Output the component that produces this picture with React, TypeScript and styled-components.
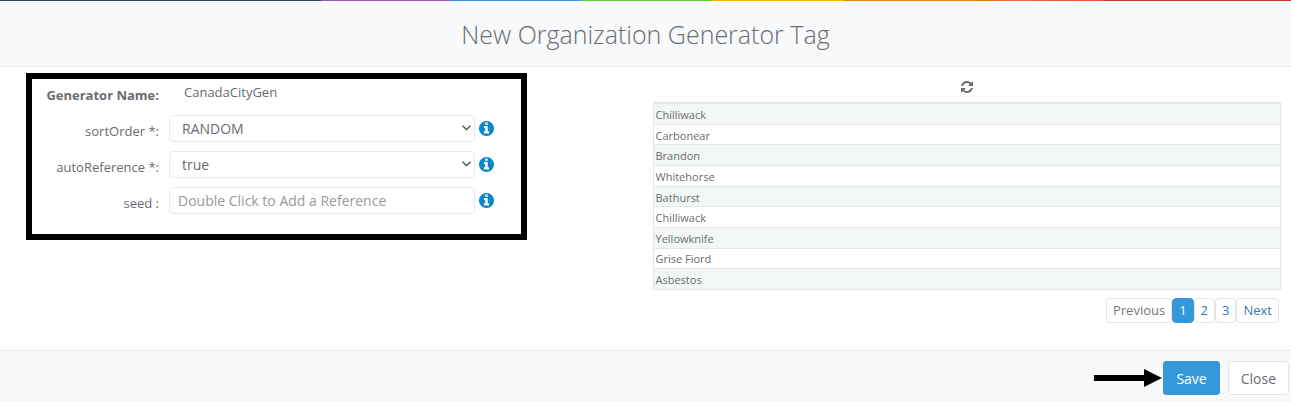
import React from "react";
import styled, { createGlobalStyle } from "styled-components";

const GlobalStyle = createGlobalStyle`
  *, *::before, *::after { box-sizing: border-box; }
  body {
    margin: 0;
    background: #fff;
    color: #6a6c6f;
    font-family: "Open Sans", "Noto Sans", sans-serif;
    font-size: 13px;
  }
  #root { min-height: 100vh; display: flex; }
  button, input, select { font: inherit; color: inherit; }
`;

const Modal = styled.form`
  flex: 1;
  display: flex;
  flex-direction: column;
  min-height: 100vh;
`;

const ColorLine = styled.div`
  height: 1px;
  background: linear-gradient(
    to right,
    #34495e 24.9%,
    #9b59b6 24.9% 35%,
    #3498db 35% 45.1%,
    #62cb31 45.1% 55.2%,
    #ffb606 55.2% 65.4%,
    #e67e22 65.4% 75.5%,
    #e74c3c 85.6%,
    #c0392b 85.6%
  );
`;

const Header = styled.header`
  padding: 16px 16px 15px;
  background: #f7f9fb;
  border-bottom: 1px solid #eceef0;
  text-align: center;
`;

const Title = styled.h1`
  margin: 0;
  font-size: 25px;
  line-height: 34px;
  font-weight: 300;
`;

const Body = styled.main`
  flex: 1;
  display: grid;
  grid-template-columns: 1fr 1fr;
  align-items: start;
`;

const FormColumn = styled.section`
  padding: 6px 119px 0 26px;
`;

const Highlight = styled.div`
  border: 6px solid #000;
  padding: 0 27px 20px 0;
  display: flex;
  flex-direction: column;
`;

const FieldRow = styled.div`
  display: grid;
  grid-template-columns: 127px 1fr 15px;
  align-items: center;
  height: 27px;
  margin-top: 9px;

  &:first-child {
    margin: 0;
  }
`;

const Label = styled.label<{ $strong?: boolean }>`
  text-align: right;
  line-height: 18px;
  padding-top: 4px;
  font-weight: ${(p) => (p.$strong ? 700 : 400)};
`;

const StaticValue = styled.output`
  padding: 0 0 2px 25px;
  line-height: 18px;
`;

const Control = styled.div`
  position: relative;
  margin: 0 4px 0 10px;
`;

const fieldBox = `
  display: block;
  width: 100%;
  height: 27px;
  border: 1px solid #e8eaec;
  border-radius: 4px;
  background: #fff;
  font-size: 14px;
  outline: none;
`;

const Select = styled.select`
  ${fieldBox}
  appearance: none;
  padding: 0 24px 0 12px;
`;

const TextInput = styled.input`
  ${fieldBox}
  padding: 0 8px;
  &::placeholder { color: #999; opacity: 1; }
`;

const Chevron = styled.svg`
  position: absolute;
  right: 4px;
  top: 10px;
  pointer-events: none;
`;

const IconButton = styled.button<{ $color?: string }>`
  display: flex;
  padding: 0;
  border: 0;
  background: none;
  color: ${(p) => p.$color ?? "inherit"};
`;

const Preview = styled.section`
  padding: 14px 10px 0 7px;
  display: flex;
  flex-direction: column;
`;

const RefreshBar = styled.div`
  display: flex;
  justify-content: center;
  height: 21px;
`;

const Table = styled.table`
  width: 100%;
  height: 188px;
  border-collapse: collapse;
  border: 1px solid #e4e6e6;
  border-top: 2px solid #e4e6e6;
  font-size: 11px;
  line-height: 16px;
`;

const Cell = styled.td`
  padding: 2px 2px 0;
  border-bottom: 1px solid #e4e6e6;
  tr:nth-child(odd) & { background: #f3f7f4; }
`;

const Pagination = styled.nav`
  display: flex;
  justify-content: flex-end;
  padding: 8px 2px 0 0;
`;

const PageLink = styled.a<{ $active?: boolean; $disabled?: boolean }>`
  padding: 0 6px;
  border: 1px solid ${(p) => (p.$active ? "#3498db" : "#e4e5e7")};
  border-radius: 4px;
  background: ${(p) => (p.$active ? "#3498db" : "#fff")};
  color: ${(p) => (p.$active ? "#fff" : p.$disabled ? "#777" : "#337ab7")};
  line-height: 23px;
  text-decoration: none;
`;

const Footer = styled.footer`
  display: flex;
  justify-content: flex-end;
  align-items: center;
  padding: 10px 2px 7px;
  background: #f7f9fb;
  border-top: 1px solid #e8eaec;
`;

const Button = styled.button<{ $primary?: boolean }>`
  height: 34px;
  padding: 0 12px;
  border: 1px solid ${(p) => (p.$primary ? "#3498db" : "#e4e5e7")};
  border-radius: 3px;
  background: ${(p) => (p.$primary ? "#3498db" : "#fff")};
  color: ${(p) => (p.$primary ? "#fff" : "#6a6c6f")};
  font-size: 14px;
  margin-left: ${(p) => (p.$primary ? "1px" : "8px")};
`;

const ChevronDown = () => (
  <Chevron width="9" height="6" viewBox="0 0 9 6" fill="none" stroke="#444" strokeWidth="1.3">
    <path d="M0.6 0.7 4.5 4.6 8.4 0.7" />
  </Chevron>
);

const InfoButton = ({ name }: { name: string }) => (
  <IconButton type="button" $color="#0a87cf" aria-label={`About ${name}`}>
    <svg width="15" height="15" viewBox="128 128 1536 1536" fill="currentColor">
      <path d="M1152 1376v-160q0-14-9-23t-23-9h-96v-512q0-14-9-23t-23-9h-320q-14 0-23 9t-9 23v160q0 14 9 23t23 9h96v320h-96q-14 0-23 9t-9 23v160q0 14 9 23t23 9h448q14 0 23-9t9-23zm-128-896v-160q0-14-9-23t-23-9h-192q-14 0-23 9t-9 23v160q0 14 9 23t23 9h192q14 0 23-9t9-23zm640 416q0 209-103 385.5t-279.5 279.5-385.5 103-385.5-103-279.5-279.5-103-385.5 103-385.5 279.5-279.5 385.5-103 385.5 103 279.5 279.5 103 385.5z" />
    </svg>
  </IconButton>
);

const RefreshIcon = () => (
  <svg width="12" height="12" viewBox="128 128 1536 1536" fill="currentColor">
    <path d="M1639 1056q0 5-1 7-64 268-268 434.5t-478 166.5q-146 0-282.5-55t-243.5-157l-129 129q-19 19-45 19t-45-19-19-45v-448q0-26 19-45t45-19h448q26 0 45 19t19 45-19 45l-137 137q71 66 161 102t187 36q134 0 250-65t186-179q11-17 53-117 8-23 30-23h192q13 0 22.5 9.5t9.5 22.5zm25-800v448q0 26-19 45t-45 19h-448q-26 0-45-19t-19-45 19-45l138-138q-148-137-349-137-134 0-250 65t-186 179q-11 17-53 117-8 23-30 23h-199q-13 0-22.5-9.5t-9.5-22.5v-7q65-268 270-434.5t480-166.5q146 0 284 55.5t245 156.5l130-129q19-19 45-19t45 19 19 45z" />
  </svg>
);

const Arrow = () => (
  <svg width="68" height="18" viewBox="0 0 68 18" aria-hidden="true">
    <path d="M0 6h50V0l18 9-18 9v-6H0z" />
  </svg>
);

const selects = [
  { name: "sortOrder", options: ["RANDOM", "SEQUENTIAL"] },
  { name: "autoReference", options: ["true", "false"] },
];

const cities = [
  "Chilliwack",
  "Carbonear",
  "Brandon",
  "Whitehorse",
  "Bathurst",
  "Chilliwack",
  "Yellowknife",
  "Grise Fiord",
  "Asbestos",
];

export default function App() {
  return (
    <>
      <GlobalStyle />
      <Modal onSubmit={(e) => e.preventDefault()}>
        <ColorLine />
        <Header>
          <Title>New Organization Generator Tag</Title>
        </Header>
        <Body>
          <FormColumn>
            <Highlight>
              <FieldRow>
                <Label $strong htmlFor="generatorName">Generator Name:</Label>
                <StaticValue id="generatorName">CanadaCityGen</StaticValue>
              </FieldRow>
              {selects.map(({ name, options }) => (
                <FieldRow key={name}>
                  <Label htmlFor={name}>{name} *:</Label>
                  <Control>
                    <Select id={name}>
                      {options.map((o) => (
                        <option key={o}>{o}</option>
                      ))}
                    </Select>
                    <ChevronDown />
                  </Control>
                  <InfoButton name={name} />
                </FieldRow>
              ))}
              <FieldRow>
                <Label htmlFor="seed">seed :</Label>
                <Control>
                  <TextInput id="seed" placeholder="Double Click to Add a Reference" />
                </Control>
                <InfoButton name="seed" />
              </FieldRow>
            </Highlight>
          </FormColumn>
          <Preview>
            <RefreshBar>
              <IconButton type="button" aria-label="Refresh">
                <RefreshIcon />
              </IconButton>
            </RefreshBar>
            <Table>
              <tbody>
                {cities.map((city, i) => (
                  <tr key={i}>
                    <Cell>{city}</Cell>
                  </tr>
                ))}
              </tbody>
            </Table>
            <Pagination aria-label="Pages">
              <PageLink $disabled href="#previous">Previous</PageLink>
              <PageLink $active href="#1">1</PageLink>
              <PageLink href="#2">2</PageLink>
              <PageLink href="#3">3</PageLink>
              <PageLink href="#next">Next</PageLink>
            </Pagination>
          </Preview>
        </Body>
        <Footer>
          <Arrow />
          <Button $primary type="submit">Save</Button>
          <Button type="button">Close</Button>
        </Footer>
      </Modal>
    </>
  );
}
